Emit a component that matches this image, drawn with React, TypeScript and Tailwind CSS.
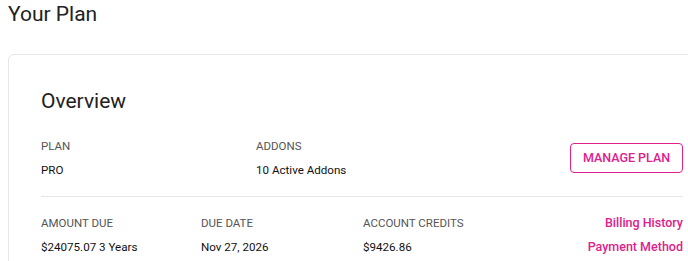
const pink = "text-[#e0208c]";

const Field = ({ label, value, className = "" }: { label: string; value: string; className?: string }) => (
  <div className={"flex flex-col gap-1 " + className}>
    <span className="text-[11.5px] leading-5 text-[#555]">{label}</span>
    <span className="text-[11.6px] leading-5 text-[#111]">{value}</span>
  </div>
);

export default function App() {
  return (
    <div
      className="w-[688px] h-[261px] overflow-hidden bg-white"
      style={{ fontFamily: "Roboto, 'Liberation Sans', sans-serif" }}
    >
      <h1 className="ml-2 text-[21px] leading-7 text-[#222]">Your Plan</h1>
      <div className="ml-2 mt-[26px] w-[708px] rounded-md border border-[#e6e6e6] p-8">
        <h2 className="text-[21px] leading-7 text-[#222] mb-[21px]">Overview</h2>
        <div className="flex items-center pb-4 border-b border-[#e6e6e6]">
          <Field label="PLAN" value="PRO" className="w-[215px]" />
          <Field label="ADDONS" value="10 Active Addons" />
          <button
            className={
              "ml-auto h-[30px] w-[113px] rounded border border-[#e0208c] text-[12.5px] font-medium " + pink
            }
          >
            MANAGE PLAN
          </button>
        </div>
        <div className="flex pt-4">
          <Field label="AMOUNT DUE" value="$24075.07 3 Years" className="w-[160px]" />
          <Field label="DUE DATE" value="Nov 27, 2026" className="w-[162px]" />
          <Field label="ACCOUNT CREDITS" value="$9426.86" />
          <div className={"ml-auto flex flex-col items-end gap-1 text-[12.5px] leading-5 font-medium " + pink}>
            <a>Billing History</a>
            <a>Payment Method</a>
          </div>
        </div>
      </div>
    </div>
  );
}
